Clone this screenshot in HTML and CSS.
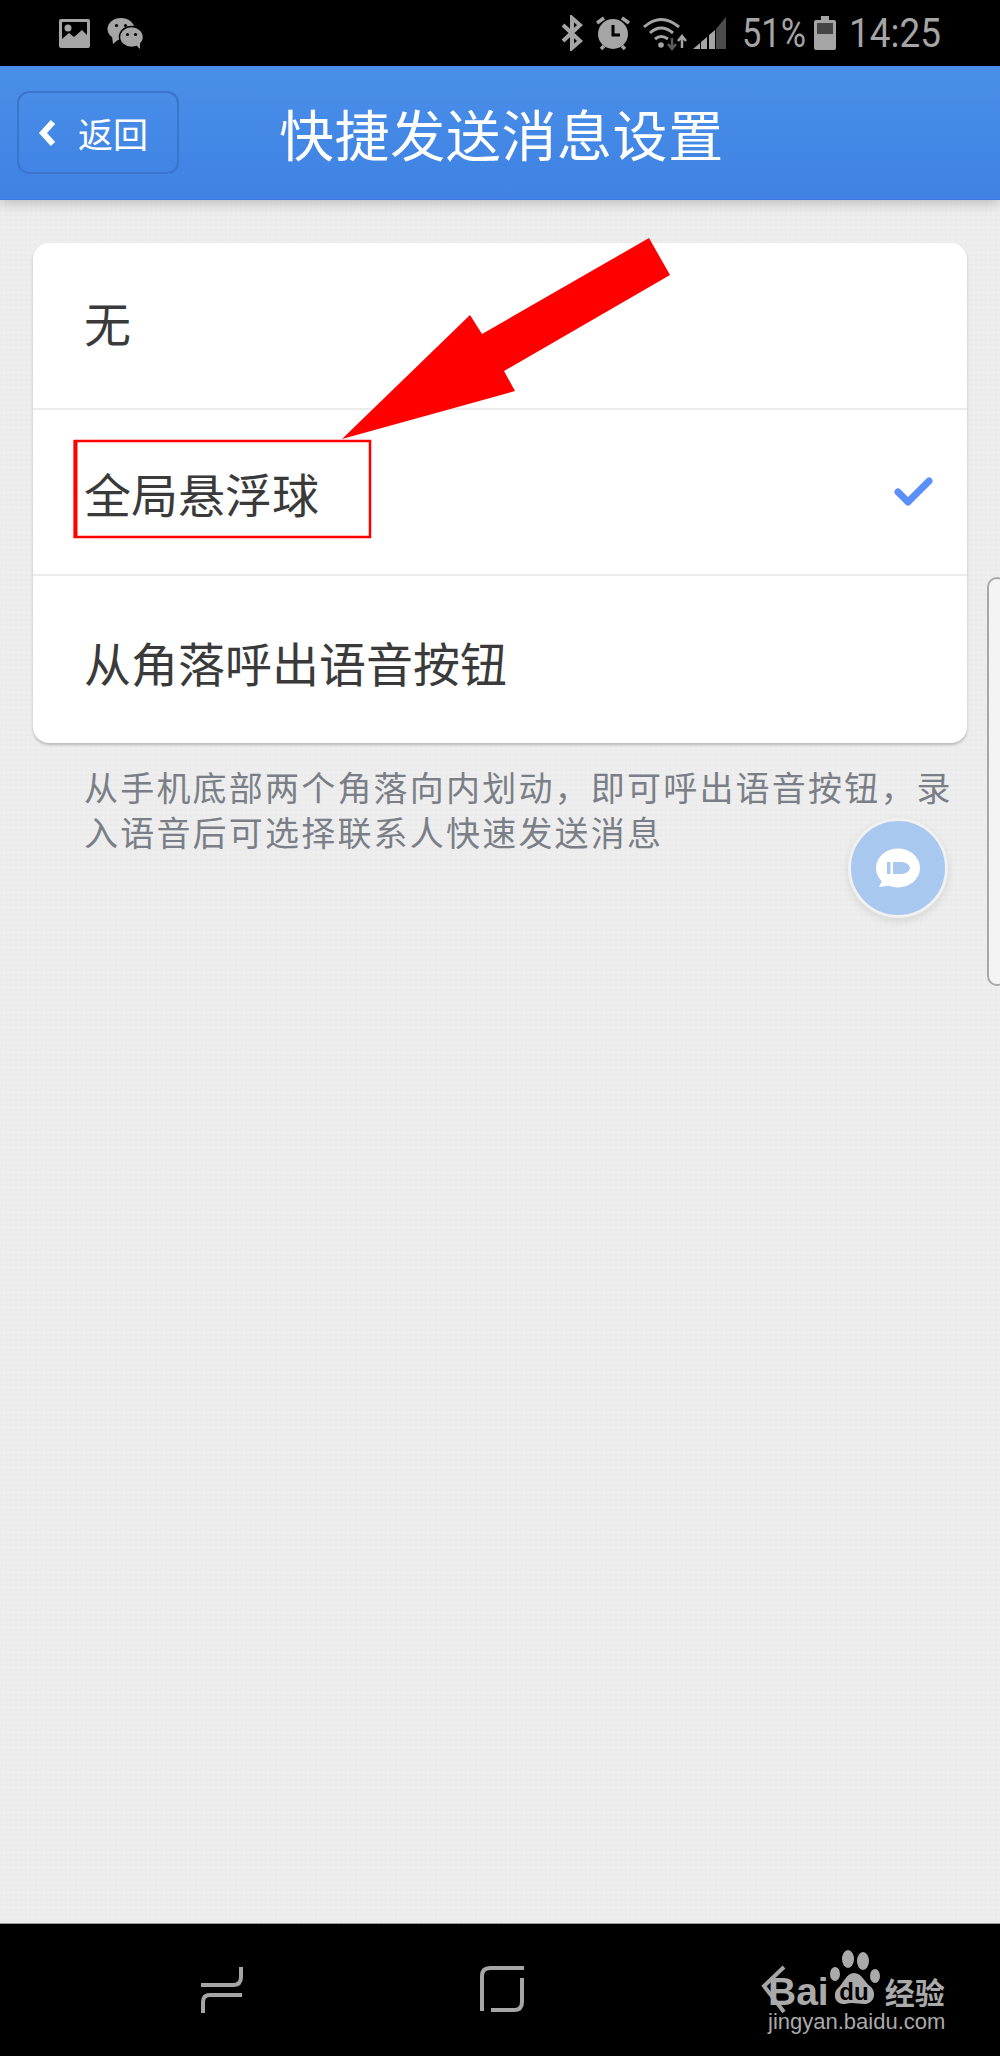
FILE: index.html
```html
<html>

<head>
    <meta charset="UTF-8">
    <meta name="viewport" content="width=device-width, initial-scale=1.0">
    <title>快捷发送消息设置</title>
    <link rel="stylesheet" href="styles.css">
</head>

<body>
    <div class="status-bar">
        <div class="status-left">
            <svg class="ic-image" width="33" height="31" viewBox="0 0 33 31">
                <rect x="1" y="1" width="31" height="29" rx="2" fill="#a5a5a5"/>
                <rect x="4" y="4" width="25" height="19" fill="#000"/>
                <circle cx="10" cy="10" r="3.5" fill="#a5a5a5"/>
                <path d="M4 24 L4 21 L11 15 L16 19 L24 12 L29 17 L29 24 Z" fill="#a5a5a5"/>
            </svg>
            <svg class="ic-wechat" width="36" height="31" viewBox="0 0 36 31">
                <ellipse cx="14" cy="11" rx="13.5" ry="11" fill="#a5a5a5"/>
                <path d="M5 18 L6 26 L12 21 Z" fill="#a5a5a5"/>
                <circle cx="9.5" cy="7.5" r="1.6" fill="#000"/>
                <circle cx="18.5" cy="7.5" r="1.6" fill="#000"/>
                <ellipse cx="24.5" cy="19" rx="12" ry="10.5" fill="#a5a5a5" stroke="#000" stroke-width="1.5"/>
                <path d="M29 27 L33 31 L33 24 Z" fill="#a5a5a5"/>
                <circle cx="20.5" cy="16.5" r="1.6" fill="#000"/>
                <circle cx="28.5" cy="16.5" r="1.6" fill="#000"/>
            </svg>
        </div>
        <div class="status-right">
            <svg class="ic-bt" width="22" height="36" viewBox="0 0 22 36">
                <path d="M2 10 L19 26 L11 33 V3 L19 10 L2 26" fill="none" stroke="#a5a5a5" stroke-width="4"/>
            </svg>
            <svg class="ic-alarm" width="34" height="36" viewBox="0 0 34 36">
                <circle cx="17" cy="19" r="15" fill="#a5a5a5"/>
                <path d="M1 8 L8 3 M33 8 L26 3 M5 34 L8 31 M29 34 L26 31" stroke="#a5a5a5" stroke-width="3.5"/>
                <path d="M17 10 V20 H24" fill="none" stroke="#000" stroke-width="3"/>
            </svg>
            <svg class="ic-wifi" width="44" height="36" viewBox="0 0 44 36">
                <path d="M1 12 Q18 -3 36 12 M7 18 Q18 8 30 18 M12 24 Q18 19 25 24" fill="none" stroke="#a5a5a5" stroke-width="3"/>
                <circle cx="18" cy="30" r="2.8" fill="#a5a5a5"/>
                <path d="M29 23 V33 M25 29 L29 34 L33 29" fill="none" stroke="#5a5a5a" stroke-width="2.5"/>
                <path d="M39 33 V22 M35 26 L39 21 L43 26" fill="none" stroke="#a5a5a5" stroke-width="2.5"/>
            </svg>
            <svg class="ic-signal" width="33" height="34" viewBox="0 0 33 34">
                <path d="M0 33 L7 27 V33 Z M8 26 L14 21 V33 H8 Z M16 19 L22 14 V33 H16 Z" fill="#a5a5a5"/>
                <path d="M23 13 L33 1 V33 H23 Z" fill="#4c4c4c"/>
            </svg>
            <span class="status-text pct">51%</span>
            <svg class="ic-battery" width="22" height="34" viewBox="0 0 22 34">
                <path d="M7 0 H15 V4 H20 Q22 4 22 6 V32 Q22 34 20 34 H2 Q0 34 0 32 V6 Q0 4 2 4 H7 Z" fill="#a5a5a5"/>
                <rect x="3" y="7" width="16" height="11" fill="#444"/>
            </svg>
            <span class="status-text clock">14:25</span>
        </div>
    </div>

    <div class="header">
        <button class="back-btn">
            <svg width="18" height="28" viewBox="0 0 18 28">
                <path d="M15 3 L5 14 L15 25" fill="none" stroke="#fff" stroke-width="6"/>
            </svg>
            <span>返回</span>
        </button>
        <h1 class="title">快捷发送消息设置</h1>
    </div>

    <div class="main">
        <div class="card">
            <div class="row row-first">无</div>
            <div class="row row-mid">
                <span>全局悬浮球</span>
                <svg class="check" width="44" height="44" viewBox="0 0 44 44">
                    <path d="M6 22 L16 32 L37 11" fill="none" stroke="#5b8ff9" stroke-width="7" stroke-linecap="round" stroke-linejoin="round"/>
                </svg>
            </div>
            <div class="row row-last">从角落呼出语音按钮</div>
        </div>
        <p class="hint">从手机底部两个角落向内划动，即可呼出语音按钮，录入语音后可选择联系人快速发送消息</p>
    </div>

    <div class="float-ball">
        <svg width="94" height="94" viewBox="0 0 94 94">
            <ellipse cx="47" cy="47" rx="22" ry="19.500" fill="#fff"/>
            <path d="M32 58 L28 66 L42 64 Z" fill="#fff"/>
            <rect x="36" y="41" width="3.500" height="12" fill="#a9c8f0"/>
            <path d="M42 41 H51 Q58 42 59 47 Q58 52 51 53 H42 Z" fill="#a9c8f0"/>
        </svg>
    </div>
    <div class="side-handle"></div>

    <svg class="annotation" width="1000" height="600" viewBox="0 0 1000 600">
        <polygon points="342,439 515,391 504,371 670,275 649,238 482,334 470,315" fill="#f00"/>
        <path d="M75 441 H370 V537 H75 Z" fill="none" stroke="#f00" stroke-width="2.500"/>
        <path d="M75.500 440 V538" stroke="#f00" stroke-width="4"/>
    </svg>

    <div class="nav-bar">
        <svg class="ic-recents" width="44" height="50" viewBox="0 0 44 50">
            <path d="M41 2 V12 Q41 20 33 20 H1" fill="none" stroke="#a5a5a5" stroke-width="4"/>
            <path d="M42 30 H10 Q3 30 3 37 V48" fill="none" stroke="#a5a5a5" stroke-width="4"/>
        </svg>
        <svg class="ic-home" width="44" height="48" viewBox="0 0 44 48">
            <path d="M2 46 V11 Q2 3 10 3 H44" fill="none" stroke="#a5a5a5" stroke-width="4"/>
            <path d="M42 13 V37 Q42 45 34 45 H11" fill="none" stroke="#a5a5a5" stroke-width="4"/>
        </svg>
        <svg class="ic-back" width="26" height="50" viewBox="0 0 26 50">
            <path d="M23 2 L3 21 L23 47" fill="none" stroke="#a5a5a5" stroke-width="4"/>
        </svg>
        <div class="watermark">
            <div class="wm-top">
                <span class="wm-bai">Bai</span>
                <svg class="wm-paw" width="50" height="56" viewBox="0 0 50 56">
                    <ellipse cx="5" cy="24" rx="5" ry="7" fill="#aaa"/>
                    <ellipse cx="18" cy="9" rx="6" ry="9" fill="#aaa"/>
                    <ellipse cx="33" cy="11" rx="6" ry="9" fill="#aaa"/>
                    <ellipse cx="45" cy="26" rx="5" ry="7" fill="#aaa"/>
                    <path d="M24 23 C32 23 34 32 41 37 C47 43 44 54 34 54 C28 54 22 52 15 54 C5 55 2 44 8 38 C14 33 16 23 24 23 Z" fill="#aaa"/>
                    <text x="24" y="50" text-anchor="middle" class="wm-du">du</text>
                </svg>
                <span class="wm-cn">经验</span>
            </div>
            <div class="wm-url">jingyan.baidu.com</div>
        </div>
    </div>
</body>

</html>
```

FILE: styles.css
```css
body {
    font-family: "Noto Sans CJK SC", "Noto Sans", sans-serif;
    margin: 0;
    width: 1000px;
    height: 2056px;
    display: flex;
    flex-direction: column;
    position: relative;
    overflow: hidden;
    background-color: #eeeeee;
    background-image:
        repeating-linear-gradient(0deg, rgba(0, 0, 0, 0.008) 0 2px, transparent 2px 5px),
        repeating-linear-gradient(90deg, rgba(0, 0, 0, 0.008) 0 2px, transparent 2px 5px);
}

svg {
    display: block;
    flex: none;
}

.status-bar {
    height: 66px;
    background: #000;
    display: flex;
    justify-content: space-between;
    align-items: center;
    padding: 0 62px 0 58px;
}

.status-left,
.status-right {
    display: flex;
    align-items: center;
}

.ic-wechat {
    margin-left: 16px;
}

.ic-alarm,
.ic-wifi {
    margin-left: 13px;
}

.ic-signal {
    margin-left: 6px;
}

.ic-battery {
    margin: 0 13px 0 9px;
}

.status-text {
    color: #a5a5a5;
    font-family: Roboto, sans-serif;
    font-size: 41px;
    line-height: 66px;
    display: block;
    transform-origin: left center;
}

.pct {
    width: 63px;
    margin-left: 16px;
    transform: scaleX(0.84);
}

.clock {
    width: 89px;
    transform: scaleX(0.9);
}

.header {
    height: 134px;
    background: linear-gradient(#4a8fe9, #3f82e3);
    border-bottom: 1px solid #3a78e0;
    box-sizing: border-box;
    display: flex;
    align-items: center;
    padding-left: 17px;
    box-shadow: 0 3px 12px rgba(0, 0, 0, 0.22);
    position: relative;
}

.back-btn {
    width: 162px;
    height: 83px;
    box-sizing: border-box;
    background: none;
    border: 2px solid #3a74cf;
    border-radius: 12px;
    color: #fff;
    font-family: inherit;
    font-size: 35px;
    display: flex;
    align-items: center;
    padding: 0 0 0 19px;
    gap: 22px;
}

.title {
    color: #fff;
    font-size: 55px;
    letter-spacing: 0.6px;
    font-weight: normal;
    margin: 0 0 0 100px;
    line-height: 1;
}

.main {
    flex: 1;
    padding: 43px 33px 0;
}

.card {
    background: #fff;
    border-radius: 16px;
    box-shadow: 0 2px 3px rgba(0, 0, 0, 0.22);
}

.row {
    height: 167px;
    box-sizing: border-box;
    border-bottom: 2px solid #ececec;
    display: flex;
    justify-content: space-between;
    align-items: center;
    padding: 0 31px 0 51px;
    font-size: 47px;
    color: #3a3a3a;
}

.row-first {
    padding-bottom: 8px;
}

.row-mid {
    height: 166px;
}

.row-last {
    border-bottom: none;
    padding-top: 3px;
}

.hint {
    margin: 21px 0 0;
    padding: 0 10px 0 51px;
    font-size: 34px;
    letter-spacing: 2.2px;
    line-height: 45px;
    color: #7a7f87;
}

.float-ball {
    position: absolute;
    left: 848px;
    top: 818px;
    width: 94px;
    height: 94px;
    border: 3px solid #f1f1f1;
    border-radius: 50%;
    background: #a9c8f0;
    box-shadow: 0 3px 8px rgba(0, 0, 0, 0.1);
}

.side-handle {
    position: absolute;
    left: 987px;
    top: 577px;
    width: 20px;
    height: 409px;
    box-sizing: border-box;
    border: 2px solid #a8a8a8;
    border-radius: 14px;
    background: #f4f4f4;
}

.annotation {
    position: absolute;
    left: 0;
    top: 0;
}

.nav-bar {
    height: 133px;
    background: #000;
    border-top: 1px solid #999;
    box-sizing: border-box;
    position: relative;
    display: flex;
    align-items: flex-start;
    padding-top: 41px;
}

.ic-recents {
    margin-left: 200px;
}

.ic-home {
    margin-left: 236px;
}

.ic-back {
    margin-left: 237px;
}

.watermark {
    position: absolute;
    left: 768px;
    top: 26px;
    width: 180px;
    color: #aaa;
}

.wm-top {
    display: flex;
    align-items: flex-end;
    height: 56px;
}

.wm-bai {
    font-family: "Liberation Sans", sans-serif;
    font-weight: bold;
    font-size: 39px;
    line-height: 44px;
    margin-bottom: -8px;
}

.wm-paw {
    margin-left: 1px;
}

.wm-du {
    font-family: "Liberation Sans", sans-serif;
    font-weight: bold;
    font-size: 24px;
    fill: #000;
}

.wm-cn {
    font-size: 30px;
    font-weight: bold;
    line-height: 40px;
    margin: 0 0 -5px 5px;
}

.wm-url {
    font-family: "Liberation Sans", sans-serif;
    font-size: 22px;
    line-height: 28px;
    margin-top: 2px;
    white-space: nowrap;
}
```
